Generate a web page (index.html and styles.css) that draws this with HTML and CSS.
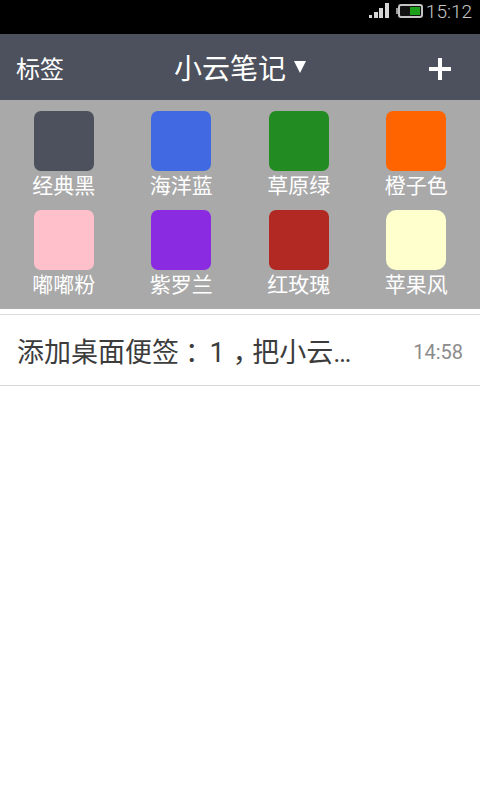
FILE: index.html
```html
<!DOCTYPE html>
<html lang="zh-CN">
<head>
<meta charset="utf-8">
<meta name="viewport" content="width=device-width, initial-scale=1">
<title>小云笔记</title>
<link rel="stylesheet" href="styles.css">
</head>
<body>
<div class="status">
  <svg class="signal" width="20" height="16" viewBox="0 0 20 16" aria-hidden="true">
    <g fill="#d6d6d6"><rect x="0" y="12" width="3" height="3"/><rect x="5" y="9" width="4" height="6"/><rect x="10" y="5" width="4" height="10"/><rect x="16" y="0" width="4" height="15"/></g>
  </svg>
  <svg class="battery" width="27" height="16" viewBox="0 0 27 16" aria-hidden="true">
    <path d="M1 5v6" stroke="#999" stroke-width="2"/>
    <rect x="3" y="2" width="23" height="12" rx="2" fill="#111" stroke="#c4c4c4" stroke-width="2"/>
    <rect x="14" y="4" width="10" height="8" fill="#1ca01c"/>
  </svg>
  <span class="clock">15:12</span>
</div>
<header class="bar">
  <button class="tags" type="button">标签</button>
  <button class="title" type="button">小云笔记
    <svg width="12" height="12" viewBox="0 0 12 12" aria-hidden="true"><path d="M0 0h12L6 12z" fill="#fff"/></svg>
  </button>
  <button class="add" type="button" aria-label="添加">
    <svg width="22" height="22" viewBox="0 0 22 22" aria-hidden="true"><path d="M11 0v22M0 11h22" stroke="#fff" stroke-width="4"/></svg>
  </button>
</header>
<section class="themes">
  <button class="theme" type="button"><span class="swatch black"></span>经典黑</button>
  <button class="theme" type="button"><span class="swatch blue"></span>海洋蓝</button>
  <button class="theme" type="button"><span class="swatch green"></span>草原绿</button>
  <button class="theme" type="button"><span class="swatch orange"></span>橙子色</button>
  <button class="theme" type="button"><span class="swatch pink"></span>嘟嘟粉</button>
  <button class="theme" type="button"><span class="swatch violet"></span>紫罗兰</button>
  <button class="theme" type="button"><span class="swatch rose"></span>红玫瑰</button>
  <button class="theme" type="button"><span class="swatch apple"></span>苹果风</button>
</section>
<main class="notes">
  <a class="note" href="#">
    <span class="text">添加桌面便签<span class="colon">：</span><span class="num">1</span><span class="comma">，</span>把小云…</span>
    <time class="time">14:58</time>
  </a>
</main>
</body>
</html>
```

FILE: styles.css
```css
* {
  box-sizing: border-box;
}

body {
  margin: 0;
  background: #fff;
  color: #fff;
  font-family: Roboto, "Noto Sans CJK SC", sans-serif;
}

button {
  margin: 0;
  padding: 0;
  border: 0;
  background: none;
  color: inherit;
  font: inherit;
}

svg {
  display: block;
}

.status {
  display: flex;
  justify-content: flex-end;
  height: 34px;
  padding: 3px 8px 0 0;
  background: #000;
}

.battery {
  margin: 0 3px 0 7px;
}

.clock {
  color: #c8c8c8;
  font-size: 19px;
  font-weight: 300;
  line-height: 18px;
}

.bar {
  display: grid;
  grid-template-columns: 1fr auto 1fr;
  align-items: center;
  height: 66px;
  padding: 0 16px;
  background: #4d515d;
}

.tags {
  justify-self: start;
  font-size: 24px;
}

.title {
  display: flex;
  align-items: center;
  gap: 8px;
  font-size: 28px;
}

.add {
  justify-self: end;
  padding: 4px 13px 0 0;
}

.themes {
  display: grid;
  grid-template-columns: repeat(4, 1fr);
  row-gap: 9px;
  padding: 11px 5px 9px;
  background: #a9a9a9;
}

.theme {
  display: flex;
  flex-direction: column;
  align-items: center;
  font-size: 21px;
  line-height: 30px;
}

.swatch {
  width: 60px;
  height: 60px;
  border-radius: 7px;
}

.black { background: #4d515d; }
.blue { background: #4169e1; }
.green { background: #228b22; }
.orange { background: #ff6400; }
.pink { background: #ffc0cb; }
.violet { background: #8a2be2; }
.rose { background: #b22822; }
.apple { background: #ffffcd; border-radius: 10px; }

.notes {
  margin-top: 5px;
  border-top: 1px solid #dcdcdc;
}

.note {
  display: flex;
  justify-content: space-between;
  align-items: center;
  height: 71px;
  padding: 0 17px;
  border-bottom: 1px solid #d6d6d6;
  color: #3c3c3c;
  text-decoration: none;
}

.text {
  font-size: 27px;
}

.colon,
.comma {
  font-feature-settings: "halt";
}

.colon {
  padding: 0 8px 0 6px;
}

.num {
  padding: 0 8px 0 3px;
}

.comma {
  padding-right: 6px;
}

.time {
  padding-top: 4px;
  color: #8c8c8c;
  font-size: 20px;
}
```
